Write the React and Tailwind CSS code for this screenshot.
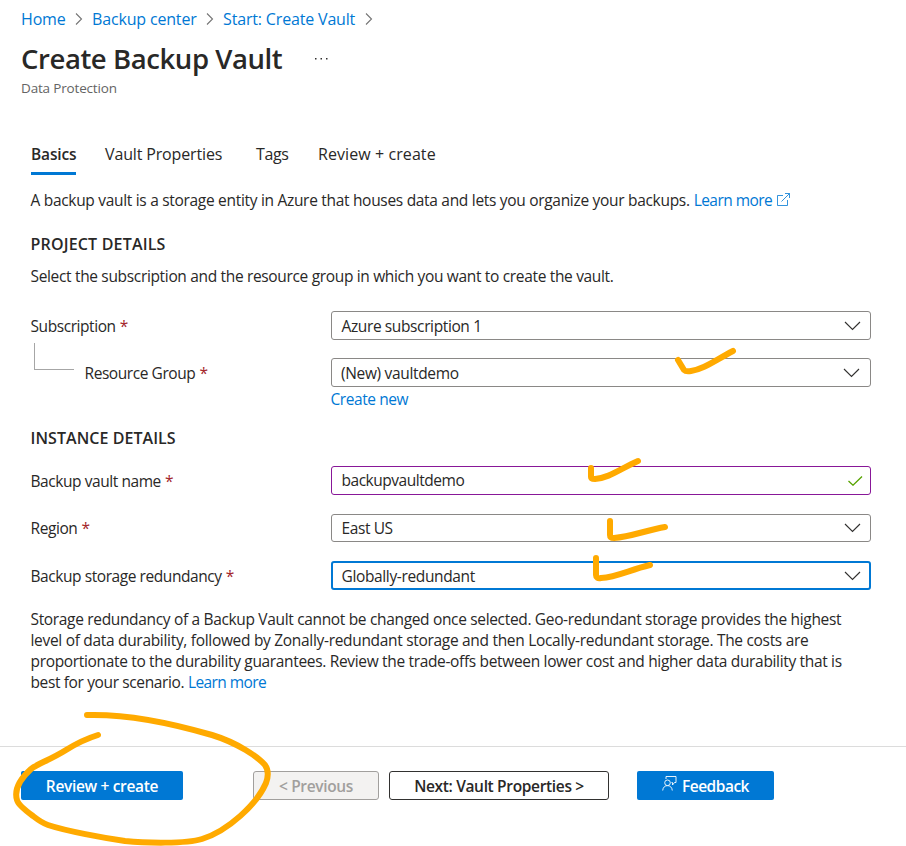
const LINK = "text-[#0078d4]";

function Crumb({ children }) {
  return (
    <>
      <a className={`text-[16px] tracking-[-0.17px] ${LINK}`}>{children}</a>
      <svg className="ml-[9.5px] mr-[9px] h-[12px] w-[8px] shrink-0" viewBox="0 0 8 12" fill="none" stroke="#757575" strokeWidth="1.1">
        <path d="M1 0.5 L6.5 6 L1 11.5" />
      </svg>
    </>
  );
}

function Chevron() {
  return (
    <svg className="h-[10px] w-[17px] shrink-0" viewBox="0 0 17 10" fill="none" stroke="#323130" strokeWidth="1.15">
      <path d="M1 1 L8.5 8.5 L16 1" />
    </svg>
  );
}

function Label({ children, className = "w-[300.5px]" }) {
  return (
    <div className={`shrink-0 tracking-[-0.43px] ${className}`}>
      {children} <span className="ml-[0.5px] text-[#a4262c]">*</span>
    </div>
  );
}

function Field({ children, className, icon = <Chevron /> }) {
  return (
    <div className={`flex w-[540px] shrink-0 items-center justify-between rounded-[3px] bg-white ${className}`}>
      {children}
      {icon}
    </div>
  );
}

function Annotations() {
  return (
    <svg className="pointer-events-none absolute left-0 top-0 h-[846px] w-[906px]" viewBox="0 0 906 846" fill="none" stroke="#ffaa00" strokeWidth="6" strokeLinecap="round" strokeLinejoin="round">
      <path d="M678 360 L684 370 Q686 372 691 371 C704 369 714 361 733 351" />
      <path d="M591 468 V477 Q591 479 595 479 C609 478 620 469 638 461" />
      <path d="M610 521 V535 Q610 538 614 538 C630 537 647 530 665 527" />
      <path d="M596 558 V575 Q596 579 601 578 C617 577 629 570 650 565" />
      <path d="M87 715 C122 714 161 720 212 735 C238 743 258 757 265 765 Q270 772 266 783 C257 804 228 831 202 839 C186 844 145 843 125 841 C104 838 66 831 48 825 Q42 823 33 816 Q18 805 17 800 C14 790 20 779 31 769 C37 764 50 760 66 750 Q82 740 98 735" />
    </svg>
  );
}

export default function App() {
  return (
    <div className="relative h-[846px] w-[906px] overflow-hidden whitespace-nowrap bg-white font-['Open_Sans','Noto_Sans',sans-serif] text-[15.5px] leading-[21px] tracking-[-0.335px] text-[#292827]">
      <header className="pl-[21px] pt-[8px]">
        <nav className="flex h-[22px] items-center">
          <Crumb>Home</Crumb>
          <Crumb>Backup center</Crumb>
          <Crumb>Start: Create Vault</Crumb>
        </nav>
        <div className="mt-[10px] flex h-[38px] items-center">
          <h1 className="w-[293px] text-[27.5px] font-semibold leading-[38px] tracking-[-0.42px]">Create Backup Vault</h1>
          <svg className="h-[3px] w-[15px]" viewBox="0 0 15 3" fill="#323130">
            <rect x="1" y="0" width="1.5" height="1.5" />
            <rect x="6.5" y="0" width="1.5" height="1.5" />
            <rect x="12" y="0" width="1.5" height="1.5" />
          </svg>
        </div>
        <div className="mt-px h-[18px] text-[13.5px] leading-[18px] tracking-[-0.17px] text-[#646464]">Data Protection</div>
      </header>

      <div className="mt-[47px] flex h-[31px] pl-[31px] text-[16px]">
        <div className="mr-[29px] w-[45px] border-b-[3px] border-[#0078d4] text-[15.5px] font-semibold tracking-[-0.15px]">Basics</div>
        <div className="w-[151px] tracking-[-0.15px]">Vault Properties</div>
        <div className="w-[62px] tracking-[-0.35px]">Tags</div>
        <div className="tracking-[0.08px]">Review + create</div>
      </div>

      <main className="pl-[30.5px]">
        <p className="mt-[15px] flex h-[21px] items-center tracking-[-0.305px]">
          <span>A backup vault is a storage entity in Azure that houses data and lets you organize your backups.</span>
          <a className={`ml-[4px] tracking-[-0.55px] ${LINK}`}>Learn more</a>
          <svg className="mb-[3px] ml-[5px] h-[13px] w-[13px]" viewBox="0 0 13 13" fill="none" stroke="#0078d4" strokeWidth="0.8">
            <path d="M6 2.5 H0.5 V12.5 H10.5 V7 M4.5 8.5 L12.5 0.5 M8 0.5 H12.5 V5" />
          </svg>
        </p>
        <h2 className="mt-[23px] text-[16px] font-semibold tracking-[0.18px]">PROJECT DETAILS</h2>
        <p className="mt-[11px]">Select the subscription and the resource group in which you want to create the vault.</p>

        <div className="mt-[24px] flex h-[29px] items-center">
          <Label className="w-[300.5px] pt-px">Subscription</Label>
          <Field className="h-[29px] border border-[#8a8886] px-[9.5px]">
            <span className="pt-px tracking-[-0.38px]">Azure subscription 1</span>
          </Field>
        </div>
        <div className="flex h-[47px]">
          <div className="ml-[3.5px] mt-[3px] h-[27px] w-[40px] border-b border-l border-[#a6a6a6]" />
          <Label className="ml-[10.5px] mt-[23px] w-[246px]">Resource Group</Label>
          <Field className="mt-[18px] h-[29px] border border-[#8a8886] px-[9.5px]">
            <span className="pt-px">(New) vaultdemo</span>
          </Field>
        </div>
        <a className={`ml-[300px] mt-[2px] block tracking-[-0.43px] ${LINK}`}>Create new</a>

        <h2 className="mt-[18px] text-[16px] font-semibold tracking-[0.06px]">INSTANCE DETAILS</h2>
        <div className="mt-[17px] flex h-[29px] items-center">
          <Label className="w-[300.5px] pt-px">Backup vault name</Label>
          <Field
            className="h-[29px] border border-[#881798] pl-[9.5px] pr-[7px]"
            icon={
              <svg className="h-[10px] w-[15px]" viewBox="0 0 15 10" fill="none" stroke="#57a300" strokeWidth="1.3">
                <path d="M0.5 5 L5 9.2 L14 0.5" />
              </svg>
            }
          >
            <span className="tracking-[-0.47px]">backupvaultdemo</span>
          </Field>
        </div>
        <div className="mt-[19px] flex h-[28px] items-center">
          <Label>Region</Label>
          <Field className="h-[28px] border border-[#8a8886] px-[9.5px]">
            <span className="tracking-[-0.4px]">East US</span>
          </Field>
        </div>
        <div className="mt-[19px] flex h-[29px] items-center">
          <Label className="w-[300.5px] pt-px">Backup storage redundancy</Label>
          <Field className="h-[29px] border-2 border-[#0078d4] px-[8.5px]">
            <span className="pt-px tracking-[-0.36px]">Globally-redundant</span>
          </Field>
        </div>

        <p className="mt-[19px] flex flex-col">
          <span>Storage redundancy of a Backup Vault cannot be changed once selected. Geo-redundant storage provides the highest</span>
          <span className="tracking-[-0.31px]">level of data durability, followed by Zonally-redundant storage and then Locally-redundant storage. The costs are</span>
          <span>proportionate to the durability guarantees. Review the trade-offs between lower cost and higher data durability that is</span>
          <span className="tracking-[-0.37px]">best for your scenario. <a className={`tracking-[-0.57px] ${LINK}`}>Learn more</a></span>
        </p>
      </main>

      <footer className="mt-[53px] flex border-t border-[#dcdcdc] pl-[21px] pt-[24px] text-center font-semibold leading-[29px]">
        <button className="h-[29px] w-[162px] rounded-[2px] bg-[#0078d4] pt-px leading-[28px] text-white">Review + create</button>
        <button className="ml-[70px] h-[29px] w-[126px] rounded-[3px] border border-[#a19f9d] bg-[#f3f2f1] pt-px leading-[26px] text-[#a19f9d]">&lt; Previous</button>
        <button className="ml-[10px] h-[29px] w-[220px] rounded-[3px] border border-[#323130] bg-white pt-px leading-[26px]">Next: Vault Properties &gt;</button>
        <button className="ml-[28px] flex h-[29px] w-[137px] items-center rounded-[2px] bg-[#0078d4] pl-[25px] text-white">
          <svg className="mb-[5px] h-[15px] w-[15px]" viewBox="0 0 15 15" fill="none" stroke="white" strokeWidth="0.9">
            <path d="M4 3 V0.5 H14 V6.5 H12.5 L10.5 9 V6.5 H9.5" />
            <circle cx="5.5" cy="6.8" r="2.8" />
            <path d="M0.7 14.5 C1 11.2 3 9.6 5.5 9.6 S10 11.2 10.3 14.5" />
          </svg>
          <span className="ml-[5px] pt-px tracking-[-0.5px]">Feedback</span>
        </button>
      </footer>
      <Annotations />
    </div>
  );
}
